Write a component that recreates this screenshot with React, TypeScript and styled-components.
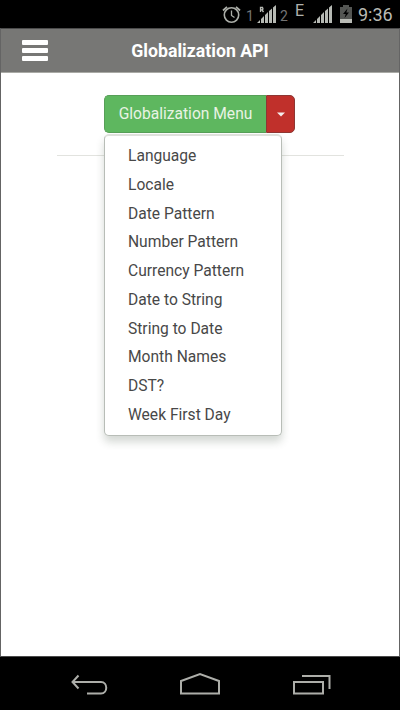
import React from 'react';
import styled, { createGlobalStyle } from 'styled-components';

const GlobalStyle = createGlobalStyle`
  * { box-sizing: border-box; }
  body { margin: 0; background: #fff; font-family: Roboto, "Noto Sans", sans-serif; }
`;

const Screen = styled.div`
  width: 400px;
  height: 710px;
  display: flex;
  flex-direction: column;
  background: #fff;
  overflow: hidden;
`;

const StatusBar = styled.div`
  height: 28px;
  flex: none;
  background: #000;
  display: flex;
  align-items: flex-start;
  justify-content: flex-end;
  padding-right: 7px;
`;

const StatusIcon = styled.svg<{ $gap: number }>`
  display: block;
  flex: none;
  margin-left: ${(p) => p.$gap}px;
`;

const StatusLabel = styled.span<{ $w: number; $gap: number; $size: number; $top: number; $color: string }>`
  width: ${(p) => p.$w}px;
  margin-left: ${(p) => p.$gap}px;
  margin-top: ${(p) => p.$top}px;
  font-size: ${(p) => p.$size}px;
  line-height: 20px;
  color: ${(p) => p.$color};
  white-space: nowrap;
`;

const AppFrame = styled.main`
  flex: 1;
  border: 1px solid #646464;
  border-top-color: #4b4b4b;
  border-bottom-color: #4b4b4b;
  display: flex;
  flex-direction: column;
  align-items: center;
`;

const Header = styled.header`
  width: 100%;
  height: 44px;
  flex: none;
  background: #777775;
  border-bottom: 1px solid #a9aaa5;
  display: grid;
  grid-template-columns: 68px 1fr 68px;
  align-items: center;
`;

const MenuToggle = styled.button`
  margin: 0 0 0 21px;
  padding: 0;
  width: 26px;
  height: 21px;
  border: 0;
  background: none;
  display: flex;
  flex-direction: column;
  justify-content: space-between;
`;

const Bar = styled.span`
  width: 26px;
  height: 5px;
  border-radius: 1px;
  background: #fff;
`;

const Title = styled.h1`
  margin: 0;
  text-align: center;
  font-size: 17.7px;
  line-height: 24px;
  font-weight: 700;
  color: #fff;
  white-space: nowrap;
`;

const ButtonGroup = styled.div`
  position: relative;
  width: 191px;
  height: 38px;
  margin-top: 22px;
  margin-right: 1px;
  display: flex;
`;

const MainButton = styled.button`
  width: 162px;
  padding: 0;
  border: 1px solid #579f58;
  border-right: 0;
  border-radius: 5px 0 0 5px;
  background: #5eb75f;
  color: #e9f3e4;
  font: 400 15.6px/24px Roboto, sans-serif;
  white-space: nowrap;
`;

const CaretButton = styled.button`
  width: 29px;
  padding: 0;
  border: 1px solid #8e3733;
  border-radius: 0 5px 5px 0;
  background: #c0302b;
  display: flex;
  align-items: center;
  justify-content: center;
`;

const Dropdown = styled.ul`
  position: absolute;
  z-index: 1;
  top: 39px;
  left: 0;
  width: 178px;
  height: 302px;
  margin: 0;
  padding: 6px 0 0;
  list-style: none;
  background: #fff;
  border: 1px solid #b8bdb7;
  border-top: 2px solid #dfe1dc;
  border-radius: 5px;
  box-shadow: 0 6px 9px rgba(40, 60, 40, 0.2);
`;

const Item = styled.li`
  height: 28.75px;
  padding-left: 23px;
  font-size: 15.6px;
  line-height: 28.75px;
  color: #484848;
  white-space: nowrap;
`;

const Divider = styled.hr`
  width: 287px;
  height: 1px;
  margin: 22px 0 0;
  border: 0;
  background: #e2e3df;
`;

const NavBar = styled.nav`
  height: 53px;
  flex: none;
  background: #000;
  display: grid;
  grid-template-columns: 70px 110px 112px 1fr;
  padding-top: 15px;
`;

const NavIcon = styled.svg`
  display: block;
  fill: none;
  stroke: #adaea9;
  stroke-width: 2;
`;

const items = [
  'Language', 'Locale', 'Date Pattern', 'Number Pattern', 'Currency Pattern',
  'Date to String', 'String to Date', 'Month Names', 'DST?', 'Week First Day',
];

function Signal({ gap, top, roaming }: { gap: number; top: number; roaming?: boolean }) {
  return (
    <StatusIcon $gap={gap} width="20" height="28" viewBox="0 0 20 28">
      <g transform={`translate(0 ${top})`} fill="#b7bab4">
        <path d="M0 18L3 15V18ZM4 14L7 11V18H4ZM8 10L11 7V18H8ZM12 6L15 3.5V18H12ZM16 2.5L19 0V18H16Z" />
      </g>
      {roaming && <path d="M3.5 12V7.5H5.5L6 9L5 9.8H3.5M5 10L6.5 12" fill="none" stroke="#b7bab4" strokeWidth="1.3" />}
    </StatusIcon>
  );
}

export default function App() {
  return (
    <Screen>
      <GlobalStyle />
      <StatusBar>
        <StatusIcon $gap={0} width="19" height="28" viewBox="0 0 19 28" fill="none" stroke="#abaea8">
          <circle cx="9.5" cy="15" r="7.2" strokeWidth="1.6" />
          <path d="M9.5 10.5V15.5L12.5 17.5" strokeWidth="1.3" />
          <path d="M1 10.5L5 6.8M14 6.8L18 10.5" strokeWidth="1.8" />
        </StatusIcon>
        <StatusLabel $w={7} $gap={5} $size={14} $top={6} $color="#747474">1</StatusLabel>
        <Signal gap={4} top={5} roaming />
        <StatusLabel $w={8} $gap={3} $size={14} $top={6} $color="#747474">2</StatusLabel>
        <StatusLabel $w={10} $gap={7} $size={16} $top={1} $color="#afb1ac">E</StatusLabel>
        <Signal gap={8} top={5} />
        <StatusIcon $gap={7} width="12" height="28" viewBox="0 0 12 28">
          <path d="M3 5H9V7H12V23H0V7H3Z" fill="#545653" />
          <path d="M0 19H12V23H0Z" fill="#b9bbb5" />
          <path d="M7.5 8.5L3 14H5.8L4.5 18L9 12.5H6.3Z" fill="#000" />
        </StatusIcon>
        <StatusLabel $w={35} $gap={6} $size={18} $top={5} $color="#b9bbb5">9:36</StatusLabel>
      </StatusBar>
      <AppFrame>
        <Header>
          <MenuToggle aria-label="Menu"><Bar /><Bar /><Bar /></MenuToggle>
          <Title>Globalization API</Title>
        </Header>
        <ButtonGroup>
          <MainButton>Globalization Menu</MainButton>
          <CaretButton aria-label="Open menu">
            <svg width="8" height="5" viewBox="0 0 8 5"><path d="M0 .5H8L4 4.5Z" fill="#f4eeee" /></svg>
          </CaretButton>
          <Dropdown>
            {items.map((item) => <Item key={item}>{item}</Item>)}
          </Dropdown>
        </ButtonGroup>
        <Divider />
      </AppFrame>
      <NavBar>
        <span />
        <NavIcon width="40" height="26" viewBox="0 0 40 26">
          <path d="M8.5 3.5L2.5 10L8.5 16.5M2.5 10H31C38 10 38 21.5 31 21.5H17" />
        </NavIcon>
        <NavIcon width="40" height="26" viewBox="0 0 40 26">
          <path d="M1 21.5V9L20 2L39 9V21.5Z" />
        </NavIcon>
        <NavIcon width="40" height="26" viewBox="0 0 40 26">
          <path d="M2 10H31V21.5H2ZM10 4H37.5V17" />
        </NavIcon>
      </NavBar>
    </Screen>
  );
}
